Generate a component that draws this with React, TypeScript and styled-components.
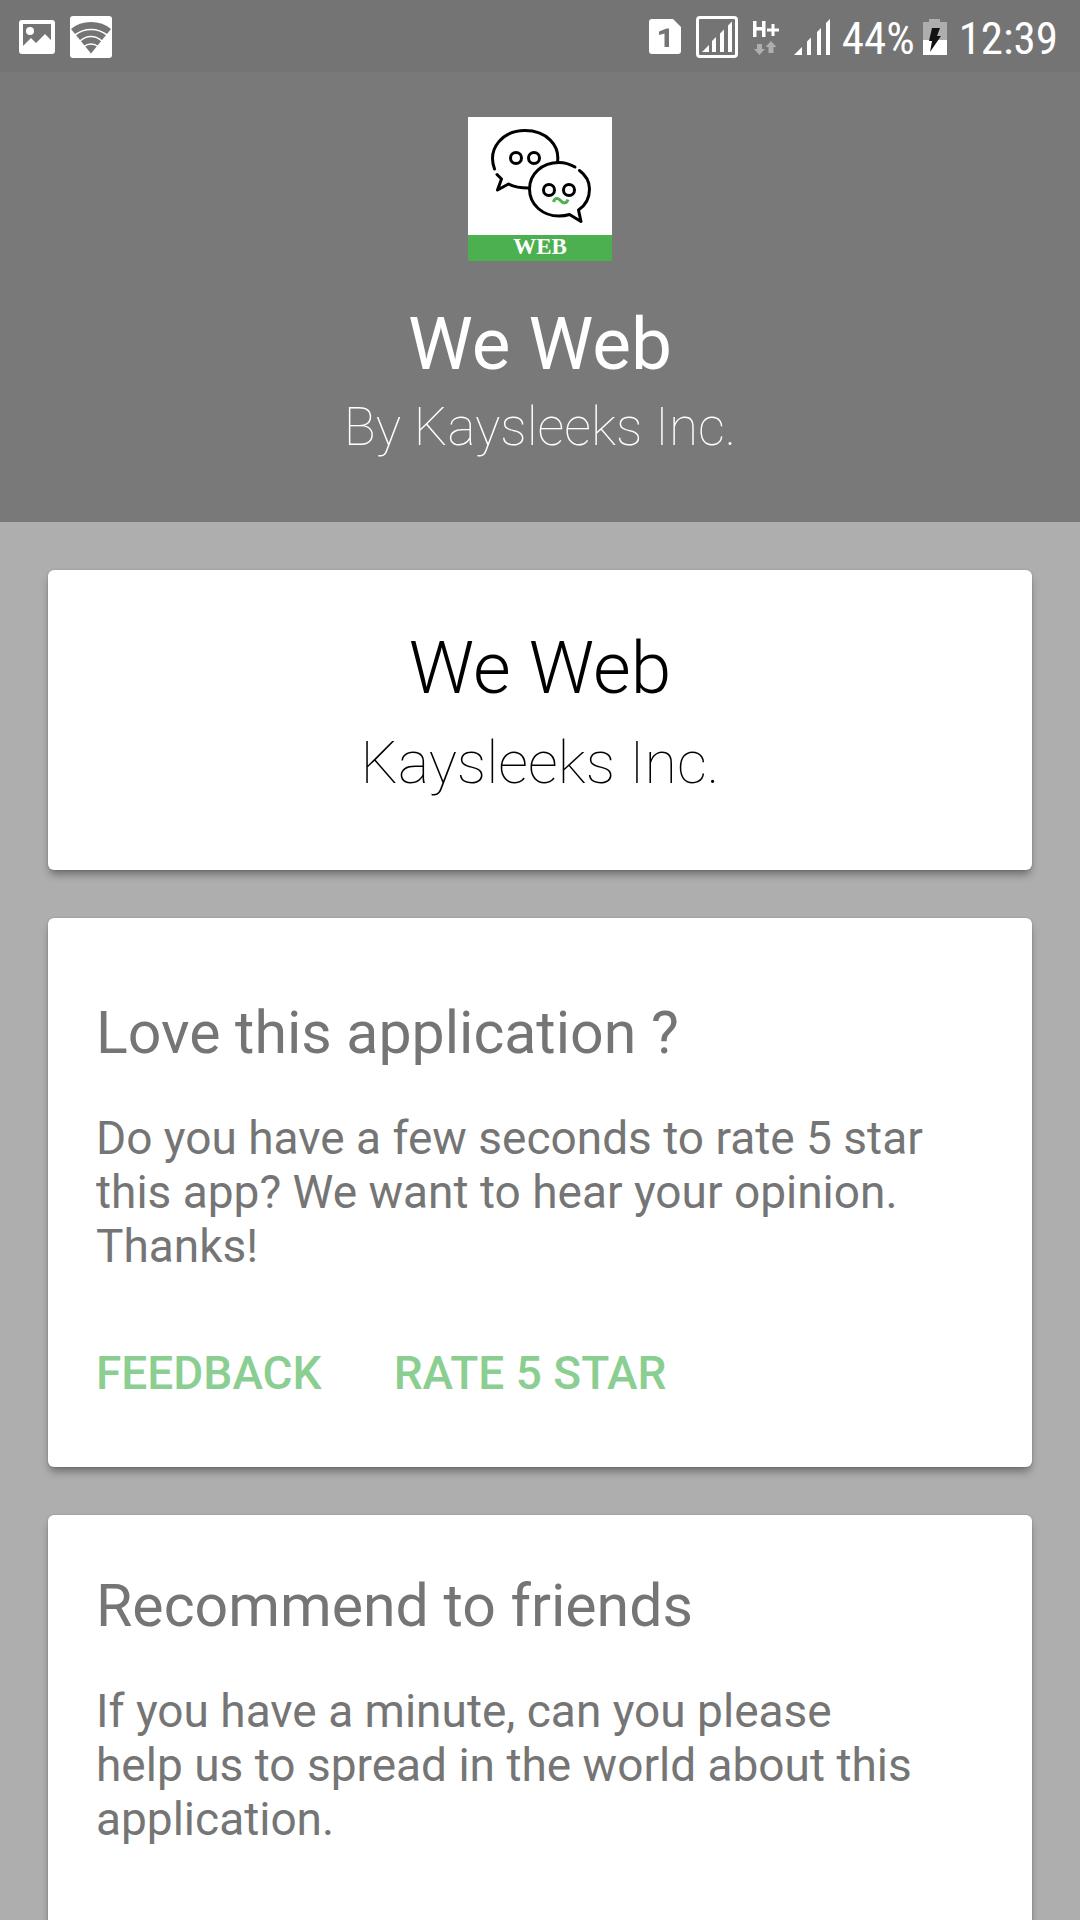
import React from "react";
import styled, { createGlobalStyle } from "styled-components";

const GlobalStyle = createGlobalStyle`
  *, *::before, *::after { box-sizing: border-box; }
  body {
    margin: 0;
    background: #aeaeae;
    font-family: Roboto, "Noto Sans", sans-serif;
  }
  h1, h2, p { margin: 0; }
`;

const Screen = styled.div`
  height: 100vh;
  overflow: hidden;
  display: flex;
  flex-direction: column;
`;

const StatusBar = styled.div`
  flex: none;
  height: 72px;
  padding: 2px 22px 0 18px;
  display: flex;
  align-items: center;
  justify-content: space-between;
  background: #747474;
  color: #ffffff;
`;

const StatusGroup = styled.div<{ $gap: number }>`
  display: flex;
  align-items: center;
  gap: ${(p) => p.$gap}px;
  svg { display: block; flex: none; }
`;

const StatusText = styled.span`
  padding-top: 4px;
  font-family: "Roboto Condensed", Roboto, sans-serif;
  font-size: 45px;
  line-height: 54px;
`;

const Header = styled.header`
  flex: none;
  display: flex;
  flex-direction: column;
  align-items: center;
  padding: 45px 48px 63px;
  background: #797979;
  color: #ffffff;
  text-align: center;
`;

const Logo = styled.div`
  width: 144px;
  height: 144px;
  margin-bottom: 41px;
  display: flex;
  flex-direction: column;
  background: #ffffff;
  svg { display: block; }
`;

const LogoLabel = styled.div`
  height: 26px;
  background: #4caf50;
  color: #ffffff;
  font: bold 23px/24px "Liberation Serif", serif;
`;

const Title = styled.h1<{ $weight: number }>`
  font-size: 73px;
  line-height: 84px;
  font-weight: ${(p) => p.$weight};
`;

const Author = styled.p<{ $large?: boolean }>`
  margin-top: ${(p) => (p.$large ? 18 : 9)}px;
  font-size: ${(p) => (p.$large ? 59 : 53)}px;
  line-height: ${(p) => (p.$large ? 70 : 64)}px;
  font-weight: 100;
`;

const Main = styled.main`
  flex: 1;
  min-height: 0;
  overflow: hidden;
  display: flex;
  flex-direction: column;
  gap: 48px;
  padding: 48px 48px 0;
`;

const Card = styled.section<{ $padding: string; $center?: boolean }>`
  flex: none;
  padding: ${(p) => p.$padding};
  border-radius: 6px;
  background: #ffffff;
  color: ${(p) => (p.$center ? "#000000" : "#757575")};
  text-align: ${(p) => (p.$center ? "center" : "left")};
  box-shadow: 0 6px 8px -2px rgba(0, 0, 0, 0.4), 0 0 2px rgba(0, 0, 0, 0.2);
`;

const CardTitle = styled.h2`
  font-size: 59px;
  line-height: 70px;
  font-weight: 400;
`;

const CardText = styled.p`
  max-width: 830px;
  margin-top: 43px;
  font-size: 46px;
  line-height: 54px;
`;

const Actions = styled.div`
  display: flex;
  gap: 72px;
  margin-top: 73px;
`;

const TextButton = styled.button`
  border: 0;
  padding: 0;
  background: none;
  color: #8bce91;
  font: 500 46px/54px Roboto, sans-serif;
  text-transform: uppercase;
  cursor: pointer;
`;

const PictureIcon = () => (
  <svg width="38" height="36" viewBox="0 0 38 36" fill="#fff">
    <path fillRule="evenodd" d="M4 1h30q3 0 3 3v28q0 3-3 3H4q-3 0-3-3V4q0-3 3-3zM5 5v22l8-8 5 5 9-9 6 6V5z" />
    <circle cx="12" cy="12" r="4" />
  </svg>
);

const WifiIcon = () => (
  <svg width="42" height="42" viewBox="0 0 42 42">
    <rect width="42" height="42" rx="3" fill="#fff" />
    <path d="M21 37.500 1 13Q9 6 21 6T41 13z" fill="#747474" />
    <g fill="none" stroke="#fff" strokeWidth="1.600">
      <path d="M5 19Q12 13.500 21 13.500T37 19" />
      <path d="M10 25Q15 20.500 21 20.500T32 25" />
      <path d="M14 30.500Q17 28 21 28T28 30.500" />
    </g>
  </svg>
);

const SimIcon = () => (
  <svg width="32" height="36" viewBox="0 0 32 36">
    <path d="M3 0h21l8 8v24q0 3-3 3H3q-3 0-3-3V3q0-3 3-3z" fill="#fff" />
    <path d="M10 12.500 17.500 9.500H20V28h-4.500V14.500L10 16z" fill="#747474" />
  </svg>
);

const BoxedSignalIcon = () => (
  <svg width="42" height="42" viewBox="0 0 42 42" fill="#fff">
    <rect x="1.500" y="1.500" width="39" height="39" rx="2.500" fill="none" stroke="#fff" strokeWidth="3" />
    <path d="M6 36 13 29V36zM16 25l4-4v15h-4zM24 17.500l4-4V36h-4zM32 9.500l4-4V36h-4z" />
  </svg>
);

const HspaIcon = () => (
  <svg width="26" height="36" viewBox="0 0 26 36">
    <path d="M0 2h3.500v6h5.500V2h3.500v16H9v-6.500H3.500V18H0zM18.500 5h3v4.500H26v3h-4.500V17h-3v-4.500H14v-3h4.500z" fill="#fff" />
    <path d="M4 25h5v5h3l-5.500 6L1 30h3zM15.500 34h5v-6h3L18 22 12.500 28h3z" fill="#aeaeae" />
  </svg>
);

const SignalIcon = () => (
  <svg width="36" height="36" viewBox="0 0 36 36" fill="#fff">
    <path d="M0 36 8 28V36zM13 22.500l4-4V36h-4zM23 13l4-4v27h-4zM32 4l4-4v36h-4z" />
  </svg>
);

const BatteryIcon = () => (
  <svg width="24" height="36" viewBox="0 0 24 36">
    <path d="M6 0h11v3h7v18H0V3h6z" fill="#aeaeae" />
    <path d="M0 21h24v15H0z" fill="#fff" />
    <path d="M9 9h8l-3 8h4L7 33 9 22H6z" fill="#111" />
  </svg>
);

const ChatFacesIcon = () => (
  <svg width="144" height="118" viewBox="0 0 144 118" fill="none" stroke="#000" strokeWidth="3" strokeLinecap="round" strokeLinejoin="round">
    <path d="M26.500 52C19 31 35 13.500 57 13.500C78 13.500 92 28 89.500 45" />
    <path d="M29 57.500L33.500 62 29.500 73 40.500 67Q49 71 60 71" />
    <path d="M107 50Q99 45.500 91 45.500C74 45.500 61.500 57 61.500 72C61.500 88 75 99 91 99Q97 99 101.500 97.500L113 104.500 110.500 93C118 88 121.500 80 121.500 72Q121.500 61 111.500 53.500" />
    <circle cx="48" cy="41" r="5.500" />
    <circle cx="66" cy="41" r="5.500" />
    <circle cx="81" cy="73" r="5.500" />
    <circle cx="101" cy="73" r="5.500" />
    <path d="M85.500 85C87 79.500 91 81.500 93 84S98.500 87 100 82.500" stroke="#4caf50" strokeLinecap="butt" />
  </svg>
);

export default function App() {
  return (
    <Screen>
      <GlobalStyle />
      <StatusBar>
        <StatusGroup $gap={14}>
          <PictureIcon />
          <WifiIcon />
        </StatusGroup>
        <StatusGroup $gap={12}>
          <StatusGroup $gap={15}>
            <SimIcon />
            <BoxedSignalIcon />
            <HspaIcon />
            <SignalIcon />
          </StatusGroup>
          <StatusGroup $gap={8}>
            <StatusText>44%</StatusText>
            <BatteryIcon />
          </StatusGroup>
          <StatusText>12:39</StatusText>
        </StatusGroup>
      </StatusBar>
      <Header>
        <Logo>
          <ChatFacesIcon />
          <LogoLabel>WEB</LogoLabel>
        </Logo>
        <Title $weight={400}>We Web</Title>
        <Author>By Kaysleeks Inc.</Author>
      </Header>
      <Main>
        <Card $padding="56px 48px 72px" $center>
          <Title as="h2" $weight={300}>We Web</Title>
          <Author $large>Kaysleeks Inc.</Author>
        </Card>
        <Card $padding="80px 48px 67px">
          <CardTitle>Love this application ?</CardTitle>
          <CardText>
            Do you have a few seconds to rate 5 star this app? We want to hear your opinion. Thanks!
          </CardText>
          <Actions>
            <TextButton type="button">Feedback</TextButton>
            <TextButton type="button">Rate 5 star</TextButton>
          </Actions>
        </Card>
        <Card $padding="56px 48px 96px">
          <CardTitle>Recommend to friends</CardTitle>
          <CardText>
            If you have a minute, can you please help us to spread in the world about this application.
          </CardText>
        </Card>
      </Main>
    </Screen>
  );
}
